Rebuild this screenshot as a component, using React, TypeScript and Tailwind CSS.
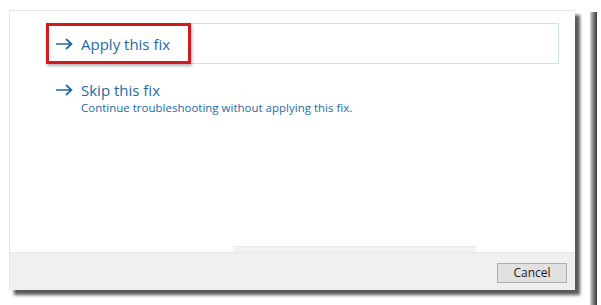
import React from "react";

function Arrow() {
  return (
    <svg width="18" height="12" viewBox="0 0 18 12" fill="none" className="shrink-0">
      <path d="M1 6h15.5M11 1l5.5 5-5.5 5" stroke="#1f6aa5" strokeWidth="1.7" />
    </svg>
  );
}

export default function App() {
  return (
    <div
      className="flex h-[305px] w-[601px] items-start overflow-hidden bg-white"
      style={{ fontFamily: '"Open Sans", "Noto Sans", sans-serif' }}
    >
      {/* dialog */}
      <div className="ml-[9px] mt-[10px] flex h-[280px] w-[566px] flex-col border-l border-t border-[#e6e6e6] bg-white shadow-[5px_5px_3px_rgba(0,0,0,0.65)]">
        <div className="flex flex-1 flex-col">
          {/* Apply row */}
          <div className="relative ml-[37px] mr-[16px] mt-[12px] flex h-[41px] items-center gap-2 border border-[#cde3ec] pl-[7px]">
            <Arrow />
            <span className="text-[15px] leading-5 text-[#1f6aa5]">Apply this fix</span>
            <div className="absolute left-[-2px] top-[-1px] h-[41px] w-[145px] border-[3px] border-[#cf1b20] shadow-[1px_2px_3px_rgba(0,0,0,0.3)]" />
          </div>

          {/* Skip row */}
          <div className="ml-[45px] mt-[16px] flex flex-col">
            <div className="flex items-center gap-2">
              <Arrow />
              <span className="text-[15px] leading-5 text-[#1f6aa5]">Skip this fix</span>
            </div>
            <span className="ml-[26px] text-[11.5px] leading-4 text-[#1f6aa5]">
              Continue troubleshooting without applying this fix.
            </span>
          </div>

          <div className="ml-[223px] mt-auto h-[6px] w-[243px] border-t border-[#e8e8e8] bg-[#f2f2f2]" />
        </div>

        {/* footer */}
        <div className="flex h-[38px] items-start justify-end border-t border-[#e8e8e8] bg-[#f0f0f0] pr-[8px] pt-[10px]">
          <button className="h-[20px] w-[70px] border border-[#adadad] bg-[#e1e1e1] text-[12px] leading-none text-[#1a1a1a]">
            Cancel
          </button>
        </div>
      </div>

      {/* window edge behind */}
      <div className="ml-[15px] mt-[12px] h-[293px] w-[7px] bg-gradient-to-r from-[#d8d8d8] via-[#808080] to-[#3a3a3a]" />
    </div>
  );
}
